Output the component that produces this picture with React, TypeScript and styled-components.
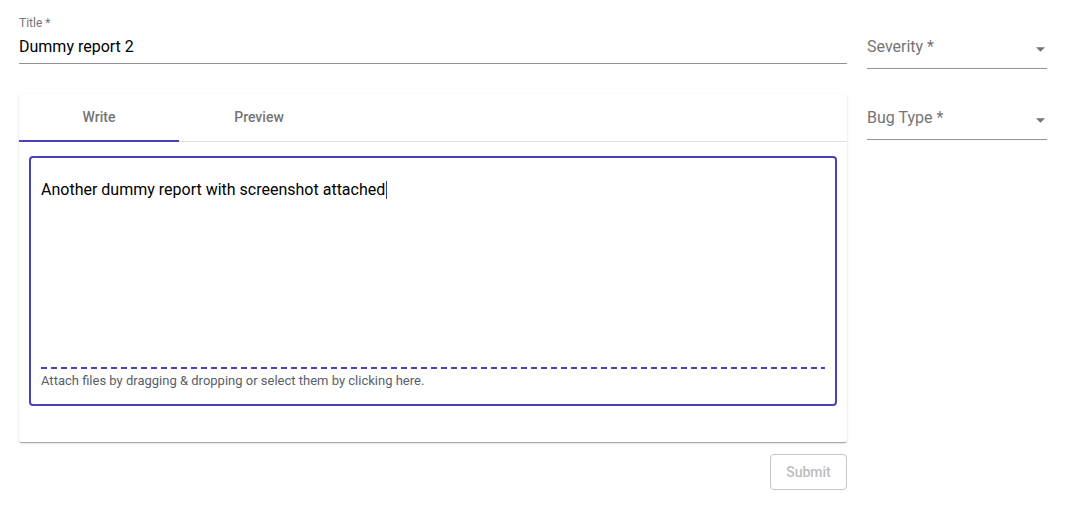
import styled, { createGlobalStyle } from "styled-components";

const accent = "#4a41bd";

const GlobalStyle = createGlobalStyle`
  body {
    margin: 0;
    background: #ffffff;
    font-family: Roboto, "Liberation Sans", sans-serif;
    color: rgba(0, 0, 0, 0.87);
  }
`;

const Page = styled.div`
  display: grid;
  grid-template-columns: 1fr 180px;
  column-gap: 20px;
  padding: 15px 42px 0 19px;
`;

const MainColumn = styled.div`
  display: flex;
  flex-direction: column;
`;

const SideColumn = styled.div`
  display: flex;
  flex-direction: column;
  gap: 39px;
  padding-top: 22px;
`;

const TextField = styled.div`
  display: flex;
  flex-direction: column;
`;

const FieldLabel = styled.label`
  font-size: 12px;
  line-height: 16px;
  color: #757575;
`;

const FieldInput = styled.div`
  font-size: 16px;
  line-height: 19px;
  padding: 6px 0 7px;
  color: #000;
  border-bottom: 1px solid #949494;
`;

const SelectField = styled.div`
  display: flex;
  align-items: flex-start;
  justify-content: space-between;
  font-size: 16px;
  line-height: 19px;
  padding-bottom: 12px;
  color: #757575;
  border-bottom: 1px solid #949494;
`;

const Arrow = styled.svg`
  width: 9px;
  height: 5px;
  margin: 10px 2px 0 0;
  fill: #757575;
`;

const Card = styled.div`
  margin-top: 30px;
  background: #fff;
  border-radius: 2px;
  box-shadow: 0px 2px 1px -1px rgba(0, 0, 0, 0.2),
    0px 1px 1px 0px rgba(0, 0, 0, 0.14), 0px 1px 3px 0px rgba(0, 0, 0, 0.12);
`;

const TabBar = styled.div`
  display: flex;
  border-bottom: 1px solid #e0e0e0;
`;

const Tab = styled.div<{ $active?: boolean }>`
  box-sizing: border-box;
  width: 160px;
  height: 48px;
  margin-bottom: -1px;
  display: flex;
  align-items: center;
  justify-content: center;
  font-size: 14px;
  font-weight: 500;
  color: #757575;
  border-bottom: 2px solid ${(p) => (p.$active ? accent : "transparent")};
`;

const EditorWrap = styled.div`
  padding: 14px 10px 36px;
`;

const EditorBox = styled.div`
  box-sizing: border-box;
  height: 250px;
  display: flex;
  flex-direction: column;
  padding: 0 10px;
  border: 2px solid ${accent};
  border-radius: 4px;
`;

const WriteArea = styled.div`
  flex: 1;
  padding-top: 22px;
  font-size: 16px;
  line-height: 19px;
  color: #000;
`;

const Caret = styled.span`
  display: inline-block;
  width: 1px;
  height: 18px;
  margin-left: 1px;
  vertical-align: -4px;
  background: #3a3aa0;
`;

const DashedLine = styled.div`
  height: 2px;
  background: repeating-linear-gradient(
    to right,
    ${accent} 0 6px,
    transparent 6px 10px
  );
`;

const AttachHint = styled.div`
  padding: 4px 0 15px;
  font-size: 13px;
  line-height: 16px;
  color: #586069;
`;

const Actions = styled.div`
  display: flex;
  justify-content: flex-end;
  margin-top: 12px;
`;

const SubmitButton = styled.button`
  box-sizing: border-box;
  width: 77px;
  height: 36px;
  padding: 0;
  background: #fff;
  border: 1px solid #c6c6c6;
  border-radius: 4px;
  font-family: Roboto, "Liberation Sans", sans-serif;
  font-size: 14px;
  font-weight: 500;
  color: #bdbdbd;
`;

function DropArrow() {
  return (
    <Arrow viewBox="0 0 10 5">
      <path d="M0 0l5 5 5-5z" />
    </Arrow>
  );
}

export default function App() {
  return (
    <>
      <GlobalStyle />
      <Page>
        <MainColumn>
          <TextField>
            <FieldLabel>Title *</FieldLabel>
            <FieldInput>Dummy report 2</FieldInput>
          </TextField>
          <Card>
            <TabBar>
              <Tab $active>Write</Tab>
              <Tab>Preview</Tab>
            </TabBar>
            <EditorWrap>
              <EditorBox>
                <WriteArea>
                  Another dummy report with screenshot attached
                  <Caret />
                </WriteArea>
                <DashedLine />
                <AttachHint>
                  Attach files by dragging &amp; dropping or select them by
                  clicking here.
                </AttachHint>
              </EditorBox>
            </EditorWrap>
          </Card>
          <Actions>
            <SubmitButton disabled>Submit</SubmitButton>
          </Actions>
        </MainColumn>
        <SideColumn>
          <SelectField>
            <span>Severity *</span>
            <DropArrow />
          </SelectField>
          <SelectField>
            <span>Bug Type *</span>
            <DropArrow />
          </SelectField>
        </SideColumn>
      </Page>
    </>
  );
}
